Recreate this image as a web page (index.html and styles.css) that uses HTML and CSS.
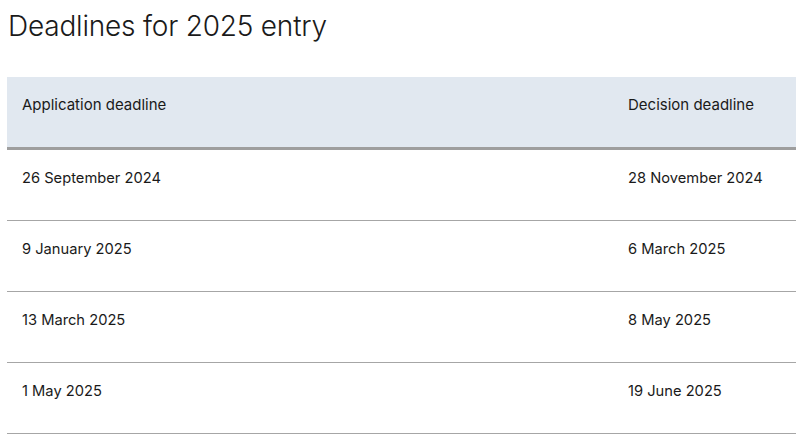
FILE: index.html
```html
<!DOCTYPE html>
<html>
<head>
<meta charset="utf-8">
<link rel="stylesheet" href="styles.css">
</head>
<body>
<h1 class="title">Deadlines for 2025 entry</h1>
<table class="deadlines">
  <thead>
    <tr><th class="col-app">Application deadline</th><th>Decision deadline</th></tr>
  </thead>
  <tbody>
    <tr><td>26 September 2024</td><td>28 November 2024</td></tr>
    <tr><td>9 January 2025</td><td>6 March 2025</td></tr>
    <tr><td>13 March 2025</td><td>8 May 2025</td></tr>
    <tr><td>1 May 2025</td><td>19 June 2025</td></tr>
  </tbody>
</table>
</body>
</html>
```
FILE: styles.css
```css
html, body { margin: 0; padding: 0; background: #fff; }
body { padding: 0 0 0 7px; font-family: Inter, "Liberation Sans", Arial, sans-serif; color: #1a1a1a; overflow: hidden; }
.title { margin: 0 0 33px 1px; padding-top: 8px; font-family: Inter, "Liberation Sans", sans-serif; font-weight: 300; font-size: 28px; line-height: 36px; letter-spacing: -0.2px; color: #1a1a1a; }
.deadlines { border-collapse: collapse; width: 789px; font-size: 14.7px; line-height: 22px; }
.deadlines th { background: #e1e8f0; font-size: 15px; font-weight: normal; text-align: left; padding: 17px 15px 31px; border-bottom: 3px solid #9e9e9e; }
.deadlines td { padding: 17px 15px 31px; border-bottom: 1px solid #a6a6a6; }
.col-app { width: 576px; }
```
